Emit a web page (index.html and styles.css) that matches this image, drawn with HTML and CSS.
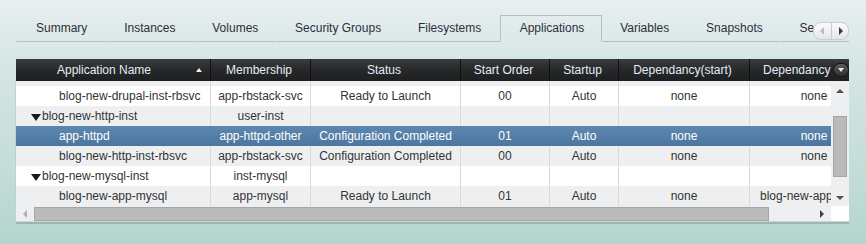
FILE: index.html
```html
<!DOCTYPE html>
<html lang="en">
<head>
    <meta charset="UTF-8">
    <title>Applications</title>
    <link rel="stylesheet" href="styles.css">
</head>
<body>
    <div class="tabbar">
        <div class="tab">Summary</div>
        <div class="tab">Instances</div>
        <div class="tab">Volumes</div>
        <div class="tab">Security Groups</div>
        <div class="tab">Filesystems</div>
        <div class="tab active">Applications</div>
        <div class="tab">Variables</div>
        <div class="tab">Snapshots</div>
        <div class="tab">Services</div>
        <div class="tab-fill"></div>
        <div class="tab-scroller">
            <span class="ts-btn ts-left"></span>
            <span class="ts-btn ts-right"></span>
        </div>
    </div>

    <div class="grid">
        <div class="hdr">
            <div class="hc c1 sorted">Application Name <span class="sort-up"></span></div>
            <div class="hc c2">Membership</div>
            <div class="hc c3">Status</div>
            <div class="hc c4">Start Order</div>
            <div class="hc c5">Startup</div>
            <div class="hc c6">Dependancy(start)</div>
            <div class="hc c7 hc-last">Dependancy<span class="col-menu"></span></div>
        </div>

        <div class="body">
            <div class="view">
                <div class="rows">
                    <div class="row even">
                        <div class="cell c1 child"></div>
                        <div class="cell c2"></div>
                        <div class="cell c3"></div>
                        <div class="cell c4"></div>
                        <div class="cell c5"></div>
                        <div class="cell c6"></div>
                        <div class="cell c7"></div>
                    </div>
                    <div class="row">
                        <div class="cell c1 child">blog-new-drupal-inst-rbsvc</div>
                        <div class="cell c2">app-rbstack-svc</div>
                        <div class="cell c3">Ready to Launch</div>
                        <div class="cell c4">00</div>
                        <div class="cell c5">Auto</div>
                        <div class="cell c6">none</div>
                        <div class="cell c7">none</div>
                    </div>
                    <div class="row even">
                        <div class="cell c1 parent"><span class="twisty"></span>blog-new-http-inst</div>
                        <div class="cell c2">user-inst</div>
                        <div class="cell c3"></div>
                        <div class="cell c4"></div>
                        <div class="cell c5"></div>
                        <div class="cell c6"></div>
                        <div class="cell c7"></div>
                    </div>
                    <div class="row selected">
                        <div class="cell c1 child">app-httpd</div>
                        <div class="cell c2">app-httpd-other</div>
                        <div class="cell c3">Configuration Completed</div>
                        <div class="cell c4">01</div>
                        <div class="cell c5">Auto</div>
                        <div class="cell c6">none</div>
                        <div class="cell c7">none</div>
                    </div>
                    <div class="row even">
                        <div class="cell c1 child">blog-new-http-inst-rbsvc</div>
                        <div class="cell c2">app-rbstack-svc</div>
                        <div class="cell c3">Configuration Completed</div>
                        <div class="cell c4">00</div>
                        <div class="cell c5">Auto</div>
                        <div class="cell c6">none</div>
                        <div class="cell c7">none</div>
                    </div>
                    <div class="row">
                        <div class="cell c1 parent"><span class="twisty"></span>blog-new-mysql-inst</div>
                        <div class="cell c2">inst-mysql</div>
                        <div class="cell c3"></div>
                        <div class="cell c4"></div>
                        <div class="cell c5"></div>
                        <div class="cell c6"></div>
                        <div class="cell c7"></div>
                    </div>
                    <div class="row even">
                        <div class="cell c1 child">blog-new-app-mysql</div>
                        <div class="cell c2">app-mysql</div>
                        <div class="cell c3">Ready to Launch</div>
                        <div class="cell c4">01</div>
                        <div class="cell c5">Auto</div>
                        <div class="cell c6">none</div>
                        <div class="cell c7">blog-new-app-mysql</div>
                    </div>
                </div>
            </div>
            <div class="vscroll">
                <span class="arr arr-up"></span>
                <div class="vtrack"><div class="vthumb"></div></div>
                <span class="arr arr-down"></span>
            </div>
        </div>

        <div class="hscroll">
            <span class="harr"><span class="arr arr-left"></span></span>
            <div class="htrack"><div class="hthumb"></div></div>
            <span class="harr"><span class="arr arr-right"></span></span>
            <span class="corner"></span>
        </div>
    </div>
</body>
</html>
```

FILE: styles.css
```css
body {
    margin: 0;
    width: 866px;
    height: 244px;
    overflow: hidden;
    background: linear-gradient(#e8eff1 0%, #d6e6e5 25%, #c3ddd7 70%, #b3d5ce 100%);
    font-family: "Liberation Sans", Arial, sans-serif;
    font-size: 12px;
    color: #333;
}

/* tabs */
.tabbar {
    position: relative;
    display: flex;
    margin: 15px 0 0 16px;
    width: 833px;
    height: 27px;
    overflow: hidden;
}
.tab {
    flex-shrink: 0;
    box-sizing: border-box;
    height: 27px;
    line-height: 25px;
    padding: 0 17.4px;
    border: 1px solid transparent;
    border-bottom-color: #bcbcbc;
    white-space: nowrap;
    color: #2e2e3a;
}
.tab:first-child {
    padding-left: 19px;
}
.tab.active {
    border-color: #bcbcbc;
    border-bottom-color: transparent;
    padding-left: 19px;
    padding-right: 16.4px;
}
.tab-fill {
    flex: 1;
    border-bottom: 1px solid #bcbcbc;
}
.tab-scroller {
    position: absolute;
    right: 0;
    top: 7px;
    display: flex;
    width: 34px;
    height: 16px;
    border: 1px solid #c9cfd0;
    border-radius: 8px;
    background: linear-gradient(#fafbfb, #e4e8e9);
    overflow: hidden;
}
.ts-btn {
    flex: 1;
    position: relative;
}
.ts-left {
    border-right: 1px solid #c9cfd0;
}
.ts-btn::after {
    content: "";
    position: absolute;
    top: 4px;
    border-top: 4px solid transparent;
    border-bottom: 4px solid transparent;
}
.ts-left::after {
    left: 6px;
    border-right: 4px solid #b8bdbe;
}
.ts-right::after {
    left: 7px;
    border-left: 4px solid #3a3a3a;
}

/* grid */
.grid {
    margin: 17px 0 0 16px;
    width: 833px;
    box-shadow: 0 2px 0 #9fb4b0;
    border-bottom: 1px solid #cfd4d4;
}
.hdr {
    display: flex;
    height: 22px;
    background: linear-gradient(#3a3c3e, #262829 50%, #1e1f20);
    color: #e4ecf7;
    overflow: hidden;
}
.hc {
    position: relative;
    flex-shrink: 0;
    box-sizing: border-box;
    line-height: 22px;
    text-align: center;
    padding-right: 3px;
    border-right: 1px solid #111;
    white-space: nowrap;
}
.hc.sorted {
    padding-right: 18px;
}
.hc-last {
    border-right: none;
    text-align: left;
    padding-left: 13px;
    overflow: hidden;
}
.sort-up {
    position: absolute;
    right: 8px;
    top: 9px;
    border-left: 3px solid transparent;
    border-right: 3px solid transparent;
    border-bottom: 4px solid #f2f2f2;
}
.col-menu {
    position: absolute;
    right: 1px;
    top: 5px;
    width: 14px;
    height: 12px;
    border-radius: 6px;
    background: linear-gradient(#5a5c5e, #2c2d2e);
    box-shadow: 0 0 0 1px #151515;
}
.col-menu::after {
    content: "";
    position: absolute;
    left: 4px;
    top: 4px;
    border-left: 3px solid transparent;
    border-right: 3px solid transparent;
    border-top: 4px solid #e8e8e8;
}

.c1 { width: 195px; }
.c2 { width: 100px; }
.c3 { width: 150px; }
.c4 { width: 89px; }
.c5 { width: 69px; }
.c6 { width: 131px; }
.c7 { width: 129px; }
.hdr .c7 { width: 99px; }

.body {
    display: flex;
    height: 125px;
    border-left: 1px solid #c8cccc;
    margin-left: -1px;
}
.view {
    width: 815px;
    height: 125px;
    overflow: hidden;
    background: #fff;
}
.rows {
    margin-top: -15px;
}
.row {
    display: flex;
    height: 20px;
    line-height: 20px;
    background: #fff;
}
.row.even {
    background: #eeeff1;
}
.row.selected {
    background: linear-gradient(#5c87af, #4d769e);
    color: #fff;
}
.cell {
    flex-shrink: 0;
    box-sizing: border-box;
    text-align: center;
    white-space: nowrap;
    overflow: hidden;
    border-right: 1px solid #d8d9db;
}
.row.selected .cell {
    border-right-color: transparent;
}
.cell.child {
    text-align: left;
    padding-left: 43px;
}
.cell.parent {
    text-align: left;
    padding-left: 15px;
}
.twisty {
    display: inline-block;
    margin-right: 1px;
    vertical-align: -1px;
    border-left: 5px solid transparent;
    border-right: 5px solid transparent;
    border-top: 7px solid #1a1a1a;
}

/* scrollbars */
.vscroll {
    display: flex;
    flex-direction: column;
    align-items: center;
    width: 18px;
    background: #eeeff0;
}
.vtrack {
    flex: 1;
    width: 100%;
    padding-top: 23px;
}
.vthumb {
    width: 12px;
    height: 59px;
    margin-left: 2px;
    background: #bababa;
    border: 1px solid #a6a6a6;
}
.arr {
    display: block;
    width: 0;
    height: 0;
}
.arr-up {
    margin-top: 8px;
    border-left: 4px solid transparent;
    border-right: 4px solid transparent;
    border-bottom: 4px solid #505050;
}
.arr-down {
    margin: 6px 0 6px;
    border-left: 4px solid transparent;
    border-right: 4px solid transparent;
    border-top: 4px solid #505050;
}
.hscroll {
    display: flex;
    height: 15px;
    background: #eeeff0;
}
.harr {
    display: flex;
    align-items: center;
    justify-content: center;
    width: 18px;
}
.arr-left {
    border-top: 4px solid transparent;
    border-bottom: 4px solid transparent;
    border-right: 4px solid #b0b0b0;
}
.arr-right {
    border-top: 4px solid transparent;
    border-bottom: 4px solid transparent;
    border-left: 4px solid #404040;
}
.htrack {
    flex: 1;
    padding-top: 1px;
}
.hthumb {
    width: 733px;
    height: 12px;
    background: #bababa;
    border: 1px solid #a6a6a6;
}
.corner {
    width: 18px;
    background: #fff;
}
```
